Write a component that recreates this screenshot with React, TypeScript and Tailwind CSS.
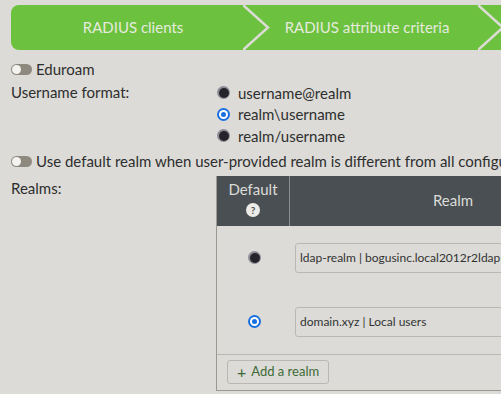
import React from 'react';

const font = { fontFamily: 'Lato, "Open Sans", sans-serif' };

function Chevron({ className }: { className: string }) {
  return (
    <svg className={className} width="28" height="45" viewBox="0 0 28 45" fill="none">
      <path d="M0 0 L25 22.5 L0 45" stroke="#dcdbd6" strokeWidth="2.5" />
    </svg>
  );
}

function Toggle() {
  return (
    <span className="inline-flex h-[11px] w-[21px] shrink-0 items-center rounded-full bg-[#8d897f] pl-[1px]">
      <span className="h-[9px] w-[9px] rounded-full bg-[#f4f3ef]" />
    </span>
  );
}

function Radio({ checked }: { checked?: boolean }) {
  if (checked) {
    return (
      <span className="flex h-[13px] w-[13px] shrink-0 items-center justify-center rounded-full bg-[#1a6fe0]">
        <span className="flex h-[9px] w-[9px] items-center justify-center rounded-full bg-white">
          <span className="h-[5px] w-[5px] rounded-full bg-[#1a6fe0]" />
        </span>
      </span>
    );
  }
  return (
    <span className="flex h-[13px] w-[13px] shrink-0 items-center justify-center rounded-full bg-[#8e8c95]">
      <span className="h-[10px] w-[10px] rounded-full bg-[#26242b]" />
    </span>
  );
}

const realms = [
  { label: 'ldap-realm | bogusinc.local2012r2ldap', def: false },
  { label: 'domain.xyz | Local users', def: true },
];

export default function App() {
  return (
    <div className="h-[394px] w-[501px] overflow-hidden bg-[#dcdbd7] text-[15px] text-[#2e2e2e]" style={font}>
      {/* Wizard steps */}
      <div className="relative ml-[11px] mt-[5px] flex h-[45px] w-[540px] items-center rounded-l-[8px] bg-[#6cc23e] text-[15px] text-[#e6eadf]">
        <div className="w-[244px] text-center">RADIUS clients</div>
        <div className="w-[224px] text-center">RADIUS attribute criteria</div>
        <Chevron className="absolute left-[232px] top-0" />
        <Chevron className="absolute left-[467px] top-0" />
      </div>

      <div className="ml-[11px] mt-[8px] flex h-[22px] items-center gap-[4px]">
        <Toggle />
        <span>Eduroam</span>
      </div>

      <div className="ml-[11px] flex">
        <div className="w-[205px] shrink-0 pt-[1px]">Username format:</div>
        <div className="flex flex-col pt-[2px]">
          {[
            ['username@realm', false],
            ['realm\\username', true],
            ['realm/username', false],
          ].map(([label, checked]) => (
            <div key={label as string} className="flex h-[21.5px] items-center gap-[8px] pl-[1px]">
              <Radio checked={checked as boolean} />
              <span>{label as string}</span>
            </div>
          ))}
        </div>
      </div>

      <div className="ml-[11px] mt-[4px] flex h-[22px] items-center gap-[4px] whitespace-nowrap">
        <Toggle />
        <span>Use default realm when user-provided realm is different from all configured realms</span>
      </div>

      <div className="ml-[11px] mt-[3px] flex">
        <div className="w-[205px] shrink-0 pt-[1px]">Realms:</div>
        <div className="w-[420px] shrink-0 border-b border-l border-[#9b9992]">
          <div className="flex h-[50px] bg-[#4a4f53] text-[#dcdcd8]">
            <div className="flex w-[73px] shrink-0 flex-col items-center border-r border-[#8a8d8f] pt-[2px]">
              <span>Default</span>
              <span className="mt-[3px] flex h-[14px] w-[14px] items-center justify-center rounded-full bg-[#ecebe7] text-[10px] font-bold leading-none text-[#4a4f53]">?</span>
            </div>
            <div className="flex w-[326px] shrink-0 items-center justify-center">Realm</div>
          </div>
          {realms.map((r) => (
            <div key={r.label} className="flex h-[64px] items-center">
              <div className="flex w-[73px] shrink-0 justify-center pl-[2px]">
                <Radio checked={r.def} />
              </div>
              <div className="ml-[5px] flex h-[30px] w-[300px] shrink-0 items-center whitespace-nowrap rounded-[3px] border border-[#bab8b2] px-[4px] text-[12px] text-[#333]">
                {r.label}
              </div>
            </div>
          ))}
          <div className="flex h-[36px] items-center border-t border-[#bab8b2] pl-[10px]">
            <button className="flex h-[24px] items-center gap-[5px] rounded-[3px] border border-[#bab8b2] px-[9px] text-[13px] text-[#3d6a36]">
              <span className="text-[16px] leading-none">+</span>
              <span>Add a realm</span>
            </button>
          </div>
        </div>
      </div>
    </div>
  );
}
